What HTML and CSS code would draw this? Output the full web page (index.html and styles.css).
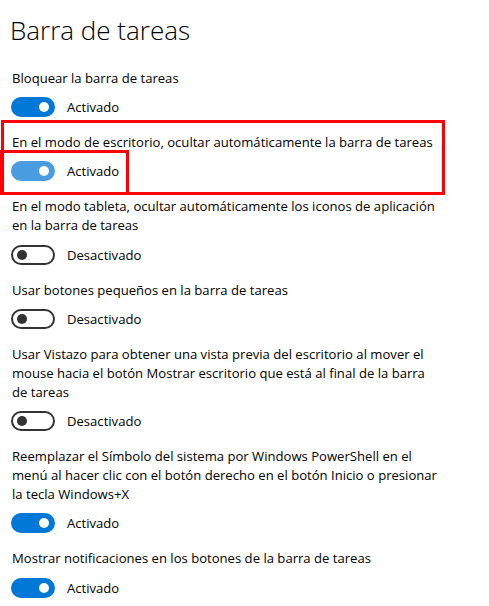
FILE: index.html
```html
<!DOCTYPE html>
<html lang="es">
<head>
    <meta charset="UTF-8">
    <meta name="viewport" content="width=device-width, initial-scale=1.0">
    <title>Barra de tareas</title>
    <link rel="stylesheet" href="styles.css">
</head>
<body>
    <div class="page">
        <h1>Barra de tareas</h1>

        <div class="setting">
            <div class="setting-label">Bloquear la barra de tareas</div>
            <div class="toggle-row">
                <span class="toggle on"></span>
                <span class="state">Activado</span>
            </div>
        </div>

        <div class="setting highlighted">
            <div class="setting-label">En el modo de escritorio, ocultar automáticamente la barra de tareas</div>
            <div class="toggle-row">
                <span class="toggle on hover"></span>
                <span class="state">Activado</span>
            </div>
            <!-- marcas rojas de la captura -->
            <div class="mark mark-outer"></div>
            <div class="mark mark-inner"></div>
        </div>

        <div class="setting">
            <div class="setting-label">En el modo tableta, ocultar automáticamente los iconos de aplicación en la barra de tareas</div>
            <div class="toggle-row">
                <span class="toggle"></span>
                <span class="state">Desactivado</span>
            </div>
        </div>

        <div class="setting">
            <div class="setting-label">Usar botones pequeños en la barra de tareas</div>
            <div class="toggle-row">
                <span class="toggle"></span>
                <span class="state">Desactivado</span>
            </div>
        </div>

        <div class="setting">
            <div class="setting-label">Usar Vistazo para obtener una vista previa del escritorio al mover el mouse hacia el botón Mostrar escritorio que está al final de la barra de tareas</div>
            <div class="toggle-row">
                <span class="toggle"></span>
                <span class="state">Desactivado</span>
            </div>
        </div>

        <div class="setting">
            <div class="setting-label">Reemplazar el Símbolo del sistema por Windows PowerShell en el menú al hacer clic con el botón derecho en el botón Inicio o presionar la tecla Windows+X</div>
            <div class="toggle-row">
                <span class="toggle on"></span>
                <span class="state">Activado</span>
            </div>
        </div>

        <div class="setting">
            <div class="setting-label">Mostrar notificaciones en los botones de la barra de tareas</div>
            <div class="toggle-row">
                <span class="toggle on"></span>
                <span class="state">Activado</span>
            </div>
        </div>
    </div>
</body>
</html>
```

FILE: styles.css
```css
body {
    margin: 0;
    background: #fff;
    color: #000;
    font-family: 'Open Sans', 'Noto Sans', sans-serif;
    overflow: hidden;
}

.page {
    padding: 10px 0 0 11px;
    width: 432px;
}

h1 {
    margin: 0 0 18.5px -1px;
    font-size: 26px;
    font-weight: 300;
    line-height: 40px;
}

.setting {
    position: relative;
    margin-bottom: 16.2px;
}

.setting-label {
    font-size: 13.1px;
    line-height: 18.8px;
    padding-left: 1px;
}

.toggle-row {
    display: flex;
    align-items: center;
    gap: 12px;
    margin-top: 9.5px;
    height: 20px;
}

.toggle {
    position: relative;
    box-sizing: border-box;
    width: 44px;
    height: 20px;
    border-radius: 10px;
    border: 2px solid #333;
    background: #fff;
}

.toggle::after {
    content: '';
    position: absolute;
    top: 3px;
    left: 4px;
    width: 10px;
    height: 10px;
    border-radius: 50%;
    background: #333;
}

.toggle.on {
    border-color: #0078d7;
    background: #0078d7;
}

.toggle.on::after {
    left: auto;
    right: 4px;
    background: #fff;
}

.toggle.on.hover {
    border-color: #4a9ce0;
    background: #4a9ce0;
}

.state {
    font-size: 13.1px;
}

.mark {
    position: absolute;
    border: 3px solid #f00;
    pointer-events: none;
}

.mark-outer {
    left: -10px;
    top: -13px;
    width: 438px;
    height: 69px;
}

.mark-inner {
    left: -11px;
    top: 17px;
    width: 123px;
    height: 39px;
}
```
